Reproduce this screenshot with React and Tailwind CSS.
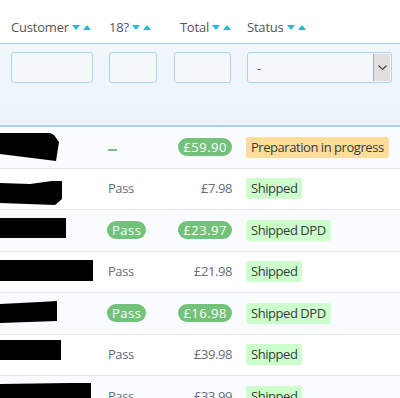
import React from 'react';

const rows = [
  { blob: '0,6 50,6 54,8 59,15 56,34 0,27', age: 'dash', total: '£59.90', totalPill: true, status: 'Preparation in progress', tone: 'orange', alt: true },
  { blob: '0,14 30,15 52,12 62,12 62,30 55,36 0,34', age: 'Pass', total: '£7.98', totalPill: false, status: 'Shipped', tone: 'green', alt: false },
  { blob: '0,8 66,8 66,28 0,28', age: 'pill', total: '£23.97', totalPill: true, status: 'Shipped DPD', tone: 'green', alt: true },
  { blob: '0,8 93,8 93,29 0,29', age: 'Pass', total: '£21.98', totalPill: false, status: 'Shipped', tone: 'green', alt: false },
  { blob: '0,11 40,9 57,8 57,28 0,30', age: 'pill', total: '£16.98', totalPill: true, status: 'Shipped DPD', tone: 'green', alt: true },
  { blob: '0,5 61,5 61,25 0,25', age: 'Pass', total: '£39.98', totalPill: false, status: 'Shipped', tone: 'green', alt: false },
  { blob: '0,8 70,7 91,7 91,30 0,30', age: 'Pass', total: '£33.99', totalPill: false, status: 'Shipped', tone: 'green', alt: true },
];

function SortArrows() {
  return (
    <svg width="20" height="6" viewBox="0 0 20 6" className="ml-[3px] shrink-0">
      <polygon points="0,0 8,0 4,5" fill="#25b9d7" />
      <polygon points="11,5 19,5 15,0" fill="#25b9d7" />
    </svg>
  );
}

function Pill({ children }) {
  return (
    <span className="inline-flex items-center h-[18px] px-[5px] rounded-full bg-[#72c279] text-white text-[13px] tracking-[0.5px]">
      {children}
    </span>
  );
}

export default function App() {
  return (
    <div className="w-[400px] h-[398px] overflow-hidden bg-white text-[13px] tracking-[-0.45px] text-[#555] font-['Open_Sans',sans-serif]">
      <div className="flex items-center h-[44px] pt-[12px] border-b border-[#a3d3ee] tracking-[-0.2px]">
        <div className="w-[98px] pl-[11px] flex items-center">Customer<SortArrows /></div>
        <div className="w-[68px] pl-[11px] flex items-center">18?<SortArrows /></div>
        <div className="w-[74px] pr-[8px] flex items-center justify-end">Total<SortArrows /></div>
        <div className="flex-1 pl-[7px] flex items-center">Status<SortArrows /></div>
      </div>

      <div className="flex h-[83px] pt-[8px] bg-gradient-to-b from-[#f1f6fa] to-[#ebf4fc] border-b-2 border-[#a9d4ec]">
        <div className="w-[98px] pl-[11px]">
          <div className="w-[82px] h-[31px] rounded-[3px] border border-[#a7d5f0] bg-[#f5f8fa]" />
        </div>
        <div className="w-[68px] pl-[11px]">
          <div className="w-[48px] h-[31px] rounded-[3px] border border-[#a7d5f0] bg-[#f5f8fa]" />
        </div>
        <div className="w-[74px] pl-[8px]">
          <div className="w-[57px] h-[31px] rounded-[3px] border border-[#a7d5f0] bg-[#f5f8fa]" />
        </div>
        <div className="flex-1 pl-[7px] pr-[8px]">
          <div className="flex h-[31px] rounded-[3px] border border-[#a7d5f0] bg-[#f5f8fa] overflow-hidden">
            <div className="flex-1 flex items-center pl-[9px] pt-[3px] text-[#555]">-</div>
            <div className="w-[17px] flex items-center justify-center bg-[#dfdfdf] border-l border-[#a9a9a9] my-px mr-px">
              <svg width="9" height="6" viewBox="0 0 9 6">
                <polyline points="0.5,0.5 4.5,4.5 8.5,0.5" fill="none" stroke="#444" strokeWidth="1.1" />
              </svg>
            </div>
          </div>
        </div>
      </div>

      {rows.map((r, i) => (
        <div
          key={i}
          className={`flex items-center h-[41.5px] border-b border-[#e5e8ec] ${r.alt ? 'bg-[#fafbfd]' : 'bg-white'}`}
        >
          <div className="w-[98px] h-full relative">
            <svg width="98" height="41" viewBox="0 0 98 41" className="absolute left-0 top-0">
              <polygon points={r.blob} fill="#000" />
            </svg>
          </div>
          <div className="w-[68px] pl-[10px] flex items-center">
            {r.age === 'dash' && <span className="block w-[9px] h-[2px] mt-[5px] bg-[#72c279]" />}
            {r.age === 'Pass' && <span className="text-[#656d78]">Pass</span>}
            {r.age === 'pill' && <span className="-ml-[1px]"><Pill>Pass</Pill></span>}
          </div>
          <div className="w-[74px] pr-[8px] flex justify-end">
            {r.totalPill ? <Pill>{r.total}</Pill> : <span className="text-[#656d78]">{r.total}</span>}
          </div>
          <div className="flex-1 pl-[6px] flex">
            <span
              className={`inline-flex items-center h-[21px] px-[5px] rounded-[3px] text-[#363a41] ${
                r.tone === 'orange' ? 'bg-[#fedc9a]' : 'bg-[#cdffcc]'
              }`}
            >
              {r.status}
            </span>
          </div>
        </div>
      ))}
    </div>
  );
}
